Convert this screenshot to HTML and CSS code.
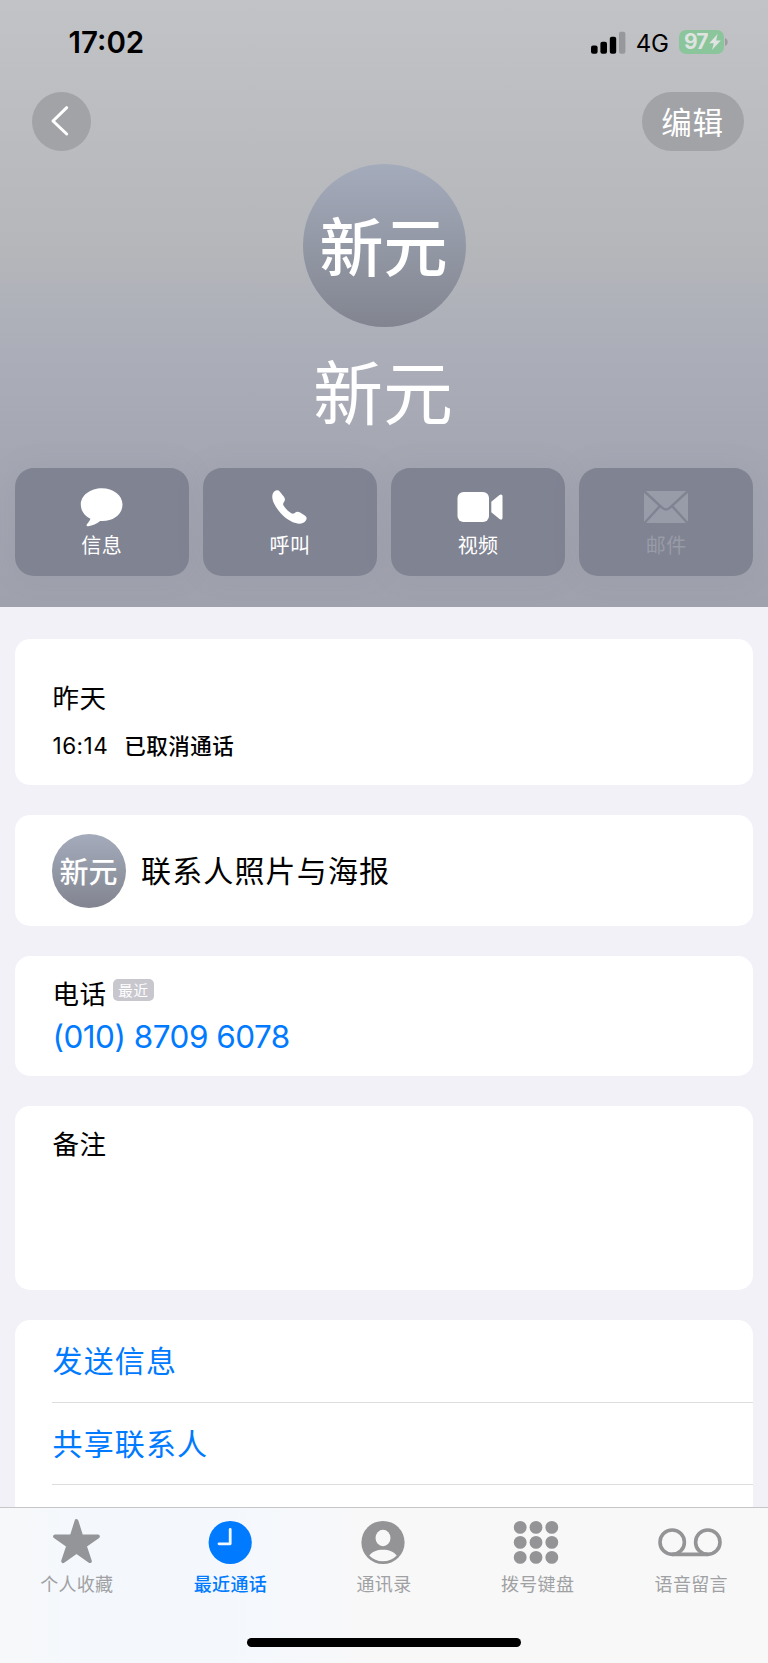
FILE: index.html
```html
<!DOCTYPE html>
<html lang="zh-CN">
<head>
<meta charset="utf-8">
<title>新元</title>
<link rel="stylesheet" href="styles.css">
</head>
<body>
<div class="screen">
  <header class="hero">
    <div class="status">
      <span class="time">17:02</span>
      <div class="status-right">
        <svg class="signal" width="35" height="23" viewBox="0 0 35 23">
          <rect x="0" y="14.5" width="6.6" height="8.2" rx="2"/>
          <rect x="9.4" y="10.7" width="6.6" height="12" rx="2"/>
          <rect x="18.8" y="5.7" width="6.4" height="17" rx="2"/>
          <rect x="28" y=".7" width="6.4" height="22" rx="2" fill="#97989b"/>
        </svg>
        <span class="network">4G</span>
        <div class="battery">
          <span>97</span>
          <svg width="12" height="16" viewBox="0 0 12 16"><path d="M8.600 0 .2 9.200h4.600L3 16 11.800 6.500H7.100z" fill="#dfe3e1"/></svg>
        </div>
        <svg class="nub" width="3" height="8" viewBox="0 0 3 8"><path d="M0 0c3.600 1.300 3.600 6.700 0 8z" fill="#9c9da0"/></svg>
      </div>
    </div>
    <nav class="nav">
      <button class="back" aria-label="返回">
        <svg width="59" height="59" viewBox="0 0 59 59"><path d="M34.700 15.700 21 29 34.700 42" fill="none" stroke="#fff" stroke-width="3" stroke-linecap="round" stroke-linejoin="round"/></svg>
      </button>
      <button class="edit">编辑</button>
    </nav>
    <div class="avatar">新元</div>
    <h1 class="name">新元</h1>
    <div class="actions">
      <button class="action">
        <svg width="46" height="40" viewBox="0 0 46 40"><path d="M22.900 1.200C34.300 1.200 43.500 8.200 43.500 17.600S35 34 23.500 34h-2.400c-3.500 2.700-7.700 4.700-11.800 5.200-1.700.200-2.200-1.100-1.200-2.200 1.400-1.600 2.600-3.100 3.300-5.300C5.500 28.900 1.800 23.700 1.800 17.600 1.800 8.200 11.500 1.200 22.900 1.200z" fill="#fff"/></svg>
        <span>信息</span>
      </button>
      <button class="action">
        <svg width="46" height="40" viewBox="0 0 46 40"><path d="M7.900 4c1.800-1.100 3.700-.8 5 .8l4 5c1.400 2 1.400 3.500.1 5.300-1 1.400-1.200 2.300-.3 3.700 1.900 3 4.200 5.200 7.200 7.200 1.400.9 2.500.8 3.800-.1 1.800-1.500 3.500-1.500 5.400-.3l4.700 3c2.200 1.500 2.300 3.600.7 5.500-2.300 2.500-5.700 3.300-9.900 2C19.600 33.600 10.800 24.700 6.800 15.900 4.700 11.400 4.500 6.400 7.900 4z" fill="#fff"/></svg>
        <span>呼叫</span>
      </button>
      <button class="action">
        <svg class="video" width="46" height="40" viewBox="0 0 46 40"><rect x=".5" y="5" width="31.500" height="30" rx="6" fill="#fff"/><path d="M34.300 14.700 42.500 8c1.500-1.100 3-.4 3 1.400v21.300c0 1.800-1.500 2.500-3 1.300l-8.200-6.700z" fill="#fff"/></svg>
        <span>视频</span>
      </button>
      <button class="action disabled">
        <svg width="46" height="40" viewBox="0 0 46 40"><rect x="1" y="4" width="44" height="32" rx="2.500" fill="#989ba8"/><path d="M1.500 4.500 19 20.500q4 4 8 0L44.500 4.500M1.500 36 16.500 19.500M44.500 36 29.500 19.500" fill="none" stroke="#808392" stroke-width="2.400"/></svg>
        <span>邮件</span>
      </button>
    </div>
  </header>
  <main class="content">
    <section class="card call-log">
      <div class="label">昨天</div>
      <div class="log-row"><span class="log-time">16:14</span><span class="log-status">已取消通话</span></div>
    </section>
    <section class="card poster">
      <div class="avatar small">新元</div>
      <span class="row-text">联系人照片与海报</span>
    </section>
    <section class="card phone">
      <div class="phone-head"><span class="label">电话</span><span class="tag">最近</span></div>
      <div class="number">(010) 8709 6078</div>
    </section>
    <section class="card notes"><div class="label">备注</div></section>
    <section class="card links">
      <div class="link">发送信息</div>
      <div class="link">共享联系人</div>
      <div class="link"></div>
    </section>
  </main>
  <footer class="tabbar">
    <div class="tabs">
      <div class="tab">
        <svg width="64" height="48" viewBox="0 0 64 48"><path d="M31.500 4 36.300 19.300 53 19.400 39.800 28.800 44.900 44.200 31.500 34.600 18.100 44.200 23.200 28.800 10 19.400 26.700 19.300z" fill="#939598" stroke="#939598" stroke-width="3.800" stroke-linejoin="round"/></svg>
        <span>个人收藏</span>
      </div>
      <div class="tab active">
        <svg width="64" height="48" viewBox="0 0 64 48"><circle cx="32.200" cy="25.500" r="21.600" fill="#007aff"/><path d="M32.200 12.300v14.500H21" fill="none" stroke="#f4f9ff" stroke-width="2.800" stroke-linecap="round" stroke-linejoin="round"/></svg>
        <span>最近通话</span>
      </div>
      <div class="tab">
        <svg width="64" height="48" viewBox="0 0 64 48"><circle cx="31" cy="25.500" r="21.600" fill="#949496"/><ellipse cx="31" cy="21" rx="7.500" ry="8.300" fill="#f8f8f9"/><path d="M17.300 38.400C20 34.700 25.300 32.700 31 32.700s11 2 13.700 5.700C41.200 42.200 36.400 44.300 31 44.300s-10.200-2.100-13.700-5.900z" fill="#f8f8f9"/></svg>
        <span>通讯录</span>
      </div>
      <div class="tab">
        <svg width="64" height="48" viewBox="0 0 64 48" fill="#949496"><circle cx="14.200" cy="10.400" r="6.400"/><circle cx="30" cy="10.400" r="6.400"/><circle cx="45.800" cy="10.400" r="6.400"/><circle cx="14.200" cy="25.400" r="6.400"/><circle cx="30" cy="25.400" r="6.400"/><circle cx="45.800" cy="25.400" r="6.400"/><circle cx="14.200" cy="40.400" r="6.400"/><circle cx="30" cy="40.400" r="6.400"/><circle cx="45.800" cy="40.400" r="6.400"/></svg>
        <span>拨号键盘</span>
      </div>
      <div class="tab">
        <svg class="voicemail" width="64" height="48" viewBox="0 0 64 48" fill="none" stroke="#949496" stroke-width="3.600"><circle cx="13.200" cy="25.200" r="12.200"/><circle cx="48.800" cy="25.200" r="12.200"/><path d="M13.200 37.400h35.600"/></svg>
        <span>语音留言</span>
      </div>
    </div>
    <div class="home"></div>
  </footer>
</div>
</body>
</html>
```
FILE: styles.css
```css
* { box-sizing: border-box; }
body {
  margin: 0;
  font-family: Inter, "Noto Sans CJK SC", sans-serif;
  color: #000;
  background: #f2f1f8;
}
button { border: 0; padding: 0; font: inherit; color: #fff; }
svg { display: block; flex: none; }

.screen {
  width: 768px;
  height: 1663px;
  overflow: hidden;
  display: flex;
  flex-direction: column;
}

.hero {
  height: 607px;
  flex: none;
  display: flex;
  flex-direction: column;
  align-items: center;
  background: linear-gradient(#c2c3c6 0, #babbbf 155px, #b5b7ba 240px, #adb0b9 325px, #a6a8b4 430px, #9fa1ad 607px);
}

.status {
  width: 100%;
  height: 92px;
  padding: 27px 40px 0 68.500px;
  display: flex;
  justify-content: space-between;
  align-items: flex-start;
}
.time { font-size: 29.500px; font-weight: 600; line-height: 31px; letter-spacing: 0; }
.status-right { display: flex; align-items: center; height: 30px; }
.network { font-size: 24px; font-weight: 400; line-height: 30px; margin: 3px 10.500px 0 10px; letter-spacing: -.3px; }
.battery {
  width: 44.500px;
  height: 24px;
  border-radius: 7px;
  background: #8bc59b;
  color: #dfe3e1;
  display: flex;
  align-items: center;
  padding-left: 5px;
  font-size: 21px;
  font-weight: 700;
  letter-spacing: -1px;
}
.battery span { width: 24.500px; line-height: 24px; }
.nub { margin-left: 1.500px; }

.nav { width: 100%; padding: 0 24.500px 0 32px; display: flex; justify-content: space-between; }
.back { width: 59px; height: 59px; border-radius: 50%; background: #a2a3a7; }
.edit {
  width: 102px;
  height: 59px;
  border-radius: 30px;
  background: #a2a3a7;
  font-size: 30.500px;
  letter-spacing: .8px;
  line-height: 62px;
}

.avatar {
  width: 163px;
  height: 163px;
  flex: none;
  margin-top: 12.500px;
  border-radius: 50%;
  background: linear-gradient(#a4abbb, #828590);
  color: #fff;
  font-size: 64px;
  font-weight: 500;
  line-height: 168px;
  text-align: center;
  text-indent: -1px;
}
.name { margin: 20px 0 0; font-size: 70px; font-weight: 400; line-height: 92px; color: #fff; padding: 2px 2px 0 0; }

.actions { width: 738px; margin-top: 27px; display: grid; grid-template-columns: repeat(4, 1fr); gap: 14.600px; }
.action {
  height: 108.500px;
  border-radius: 19px;
  background: #808392;
  box-shadow: 0 0 28px rgba(128, 131, 146, .14);
  display: flex;
  flex-direction: column;
  align-items: center;
  padding-top: 19px;
  font-size: 20px;
  letter-spacing: .4px;
}
.action span { line-height: 24px; margin-top: 7px; }
.action .video { margin-left: 3px; }
.disabled { color: #989ba8; }

.content { flex: none; height: 900px; overflow: hidden; padding: 32px 15px 0; display: flex; flex-direction: column; gap: 30px; }
.card { flex: none; background: #fff; border-radius: 15px; }
.label { font-size: 26.500px; line-height: 26px; letter-spacing: .5px; }
.call-log { height: 146px; padding: 46px 37.500px 0; }
.log-row { display: flex; gap: 16px; margin-top: 22px; line-height: 26px; }
.log-time { font-size: 22.500px; letter-spacing: .5px; }
.log-status { font-size: 21.500px; font-weight: 500; letter-spacing: .5px; }
.poster { height: 111px; padding-left: 37px; display: flex; align-items: center; gap: 15px; }
.avatar.small { width: 74px; height: 74px; margin: 0; font-size: 29px; line-height: 78px; }
.row-text { font-size: 30px; letter-spacing: 1.150px; line-height: 36px; }
.phone { height: 119.500px; padding: 24.500px 37.500px 0; }
.phone-head { display: flex; }
.phone-head .label { line-height: 27px; }
.tag {
  width: 41px;
  height: 22px;
  margin: -1.500px 0 0 6.500px;
  border-radius: 5px;
  background: #c8c7ce;
  color: #fff;
  font-size: 14.500px;
  line-height: 24px;
  letter-spacing: .7px;
  text-align: center;
}
.number { margin-top: 12.500px; font-size: 31.500px; line-height: 34px; letter-spacing: -.52px; color: #007aff; }
.notes { height: 184.500px; padding: 25px 37.500px 0; }
.links { padding-left: 37px; color: #007aff; }
.link { height: 82px; font-size: 30px; letter-spacing: 1.150px; line-height: 83px; padding-left: .5px; }
.link + .link { border-top: 1px solid #dddde0; }
.link:first-child { height: 81.500px; line-height: 82px; }

.tabbar {
  flex: none;
  height: 156px;
  border-top: 1px solid #c6c6c9;
  background: linear-gradient(90deg, #f7f8f9 0, #f4f8fd 90px, #f4f8fd 230px, #f8f8f9 360px, #f8f8f9 100%);
}
.tabs { display: grid; grid-template-columns: repeat(5, 1fr); padding-top: 9px; }
.tab { display: flex; flex-direction: column; align-items: center; font-size: 18px; letter-spacing: .3px; color: #a0a1a3; }
.tab span { line-height: 22px; margin-top: 9px; }
.voicemail { overflow: visible; }
.tab.active { color: #007aff; font-weight: 500; }
.home { width: 274px; height: 9.500px; margin: 41.500px auto 0; border-radius: 5px; background: #000; }
```
